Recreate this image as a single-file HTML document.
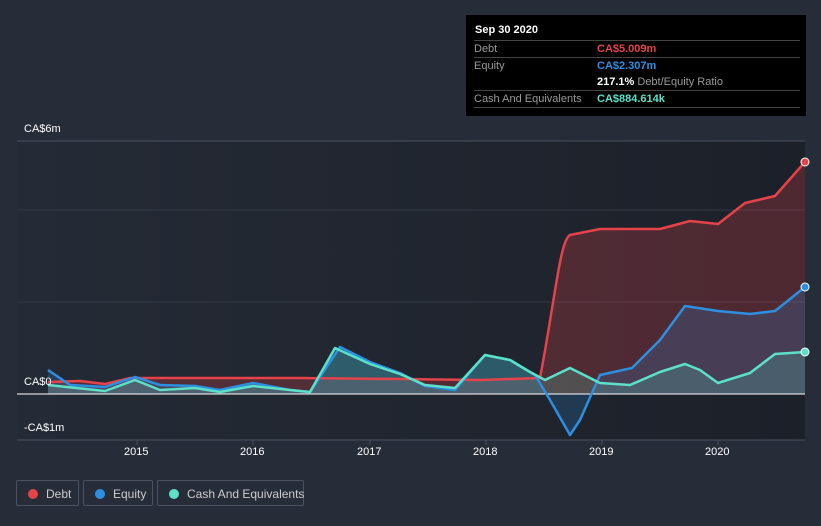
<!DOCTYPE html>
<html><head><style>
body{margin:0;width:821px;height:526px;background:#262d39;font-family:"Liberation Sans",sans-serif;overflow:hidden;position:relative}
.tt{position:absolute;left:466px;top:15px;width:340px;height:101px;background:#000;color:#fff;font-size:11px}
.tt .h{position:absolute;left:9px;top:9px;font-weight:bold;font-size:11px}
.row{position:absolute;left:8px;width:326px;border-top:1px solid #444;height:17px;line-height:17px;color:#999}
.row span{position:absolute;left:123px;font-weight:bold}
.lg{position:absolute;top:480px;height:26px;border:1px solid #4a5160;border-radius:2px;color:#ccc;font-size:12px;line-height:26px;box-sizing:border-box;white-space:nowrap}
.lg i{display:inline-block;width:10px;height:10px;border-radius:50%;margin:0 8px 0 11px;vertical-align:-1px}
.ax{position:absolute;color:#fff;font-size:11px}
</style></head><body>
<svg width="821" height="526" style="position:absolute;left:0;top:0">
<defs><linearGradient id="g" x1="0" x2="1" y1="0" y2="0"><stop offset="0" stop-color="#252b36"/><stop offset="1" stop-color="#1c2029"/></linearGradient></defs>
<rect x="17" y="141" width="788" height="299" fill="url(#g)"/>
<line x1="17" y1="141" x2="805" y2="141" stroke="#4a5160"/>
<line x1="17" y1="210" x2="805" y2="210" stroke="#343a46"/>
<line x1="17" y1="302" x2="805" y2="302" stroke="#343a46"/>
<line x1="17" y1="440" x2="805" y2="440" stroke="#4a5160"/>
<path d="M48,382 L80,381 105,384 130,378 300,378 400,379 480,380 540,378 C555,300 560,240 570,235 L600,229 660,229 690,221 718,224 745,203 775,196 805,162 L805,394 48,394Z" fill="#e5424a" fill-opacity="0.25"/>
<path d="M48,370 L70,385 105,387 135,377 160,385 195,386 220,390 253,383 290,390 310,392 340,347 370,362 400,373 425,386 455,390 485,355 510,360 535,375 550,400 570,435 580,420 600,375 632,368 660,340 685,306 718,311 750,314 775,311 805,287 L805,394 48,394Z" fill="#2d8fe0" fill-opacity="0.2"/>
<path d="M48,385 L105,391 135,380 160,390 195,388 220,392 253,386 290,390 310,392 335,348 370,364 400,374 425,385 455,388 485,355 510,360 530,372 545,380 570,368 600,383 630,385 660,372 685,364 700,370 718,383 750,373 775,354 805,352 L805,394 48,394Z" fill="#5ce0c8" fill-opacity="0.2"/>
<line x1="17" y1="394" x2="805" y2="394" stroke="#fff"/>
<g fill="none" stroke-width="2.5" stroke-linejoin="round">
<path d="M48,382 L80,381 105,384 130,378 300,378 400,379 480,380 540,378 C555,300 560,240 570,235 L600,229 660,229 690,221 718,224 745,203 775,196 805,162" stroke="#e5424a"/>
<path d="M48,370 L70,385 105,387 135,377 160,385 195,386 220,390 253,383 290,390 310,392 340,347 370,362 400,373 425,386 455,390 485,355 510,360 535,375 550,400 570,435 580,420 600,375 632,368 660,340 685,306 718,311 750,314 775,311 805,287" stroke="#2d8fe0"/>
<path d="M48,385 L105,391 135,380 160,390 195,388 220,392 253,386 290,390 310,392 335,348 370,364 400,374 425,385 455,388 485,355 510,360 530,372 545,380 570,368 600,383 630,385 660,372 685,364 700,370 718,383 750,373 775,354 805,352" stroke="#5ce0c8"/>
</g>
<circle cx="805" cy="162" r="4" fill="#e5424a" stroke="#fff"/>
<circle cx="805" cy="287" r="4" fill="#2d8fe0" stroke="#fff"/>
<circle cx="805" cy="352" r="4" fill="#5ce0c8" stroke="#fff"/>
<g stroke="#4a5160"><line x1="137" y1="440" x2="137" y2="445"/><line x1="253" y1="440" x2="253" y2="445"/><line x1="370" y1="440" x2="370" y2="445"/><line x1="486" y1="440" x2="486" y2="445"/><line x1="602" y1="440" x2="602" y2="445"/><line x1="718" y1="440" x2="718" y2="445"/></g>
</svg>
<div class="ax" style="left:24px;top:123px">CA$6m</div>
<div class="ax" style="left:24px;top:376px">CA$0</div>
<div class="ax" style="left:24px;top:422px">-CA$1m</div>
<div class="ax" style="left:124px;top:446px">2015</div>
<div class="ax" style="left:240px;top:446px">2016</div>
<div class="ax" style="left:357px;top:446px">2017</div>
<div class="ax" style="left:473px;top:446px">2018</div>
<div class="ax" style="left:589px;top:446px">2019</div>
<div class="ax" style="left:705px;top:446px">2020</div>
<div class="tt">
<div class="h">Sep 30 2020</div>
<div class="row" style="top:25px">Debt<span style="color:#e5424a">CA$5.009m</span></div>
<div class="row" style="top:42px">Equity<span style="color:#2d8fe0">CA$2.307m</span></div>
<div class="row" style="top:59px;border-top:none"><span style="color:#fff">217.1% <b style="color:#999;font-weight:normal">Debt/Equity Ratio</b></span></div>
<div class="row" style="top:75px">Cash And Equivalents<span style="color:#5ce0c8">CA$884.614k</span></div>
<div class="row" style="top:92px;height:0"></div>
</div>
<div class="lg" style="left:16px;width:63px"><i style="background:#e5424a"></i>Debt</div>
<div class="lg" style="left:83px;width:70px"><i style="background:#2d8fe0"></i>Equity</div>
<div class="lg" style="left:157px;width:147px"><i style="background:#5ce0c8"></i>Cash And Equivalents</div>
</body></html>
